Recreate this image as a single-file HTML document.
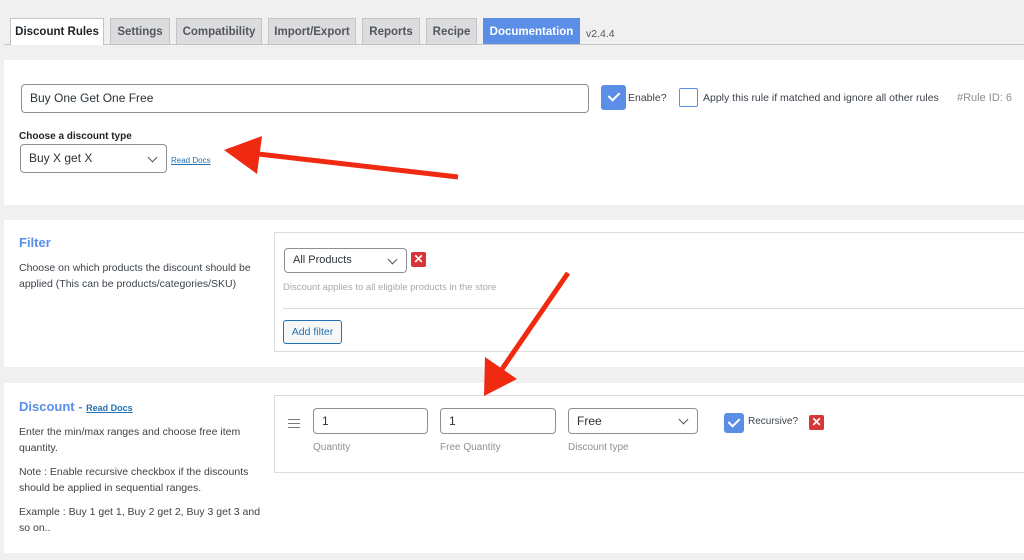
<!DOCTYPE html>
<html><head><meta charset="utf-8"><style>
*{box-sizing:border-box;margin:0;padding:0}
body{width:1024px;height:560px;background:#f0f0f1;font-family:"Liberation Sans",sans-serif;color:#3c434a;position:relative;overflow:hidden;font-size:11px}
.a{position:absolute;white-space:nowrap}
.tab{position:absolute;top:18px;height:26px;background:#dcdcde;border:1px solid #c3c4c7;border-bottom:none;font-size:11.5px;font-weight:bold;color:#50575e;text-align:center;line-height:27px}
.panel{position:absolute;left:4px;right:0;background:#fff}
.inp{position:absolute;border:1px solid #8c8f94;border-radius:4px;background:#fff;font-size:12px;color:#2c3338;padding-left:8px;line-height:26px}
.sel:after{content:"";position:absolute;right:10px;top:50%;margin-top:-5px;width:6px;height:6px;border-right:1.5px solid #50575e;border-bottom:1.5px solid #50575e;transform:rotate(45deg)}
.cb{position:absolute;background:#5b8ee6;border-radius:3px}
.cb:after{content:"";position:absolute;left:50%;top:45%;width:9px;height:5px;border-left:2px solid #fff;border-bottom:2px solid #fff;transform:translate(-50%,-60%) rotate(-45deg)}
.x{position:absolute;width:15px;height:15px;background:#d63638;border-radius:2px;color:#fff;font-size:12px;font-weight:bold;text-align:center;line-height:15px}
.lbl{position:absolute;font-size:10px;color:#8c8f94}
.box{position:absolute;border:1px solid #dcdcde;background:#fff}
</style></head><body>
<div class="a" style="left:4px;right:0;top:44px;border-top:1px solid #c3c4c7"></div>
<div class="tab" style="left:10px;width:94px;background:#fff;color:#1d2327;height:27px">Discount Rules</div>
<div class="tab" style="left:110px;width:60px">Settings</div>
<div class="tab" style="left:176px;width:86px">Compatibility</div>
<div class="tab" style="left:268px;width:88px">Import/Export</div>
<div class="tab" style="left:362px;width:58px">Reports</div>
<div class="tab" style="left:426px;width:51px">Recipe</div>
<div class="tab" style="left:483px;width:97px;background:#5b8ee6;border-color:#5b8ee6;color:#fff">Documentation</div>
<div class="a" style="left:586px;top:28px;font-size:10.5px;color:#50575e">v2.4.4</div>

<div class="panel" style="top:60px;height:145px"></div>
<div class="inp" style="left:21px;top:84px;width:568px;height:29px;line-height:27px">Buy One Get One Free</div>
<div class="cb" style="left:601px;top:85px;width:25px;height:25px"></div>
<div class="a" style="left:628px;top:92px;font-size:10.5px">Enable?</div>
<div class="a" style="left:679px;top:88px;width:19px;height:19px;border:1.5px solid #5b8ee6;border-radius:2px"></div>
<div class="a" style="left:703px;top:92px;font-size:10.5px">Apply this rule if matched and ignore all other rules</div>
<div class="a" style="left:957px;top:92px;font-size:11px;color:#8c8f94">#Rule ID: 6</div>
<div class="a" style="left:19px;top:131px;font-size:10px;font-weight:bold;color:#1d2327">Choose a discount type</div>
<div class="inp sel" style="left:20px;top:144px;width:147px;height:29px">Buy X get X</div>
<div class="a" style="left:171px;top:156px;font-size:8px;color:#2271b1;text-decoration:underline">Read Docs</div>

<div class="panel" style="top:220px;height:147px"></div>
<div class="a" style="left:19px;top:235px;font-size:13px;font-weight:bold;color:#5b8ee6">Filter</div>
<div class="a" style="left:19px;top:260px;font-size:10.5px;line-height:16px">Choose on which products the discount should be<br>applied (This can be products/categories/SKU)</div>
<div class="box" style="left:274px;top:232px;width:760px;height:120px"></div>
<div class="inp sel" style="left:284px;top:248px;width:123px;height:25px;line-height:23px;font-size:11px">All Products</div>
<div class="x" style="left:411px;top:252px">✕</div>
<div class="a" style="left:283px;top:282px;font-size:9.5px;color:#a7aaad">Discount applies to all eligible products in the store</div>
<div class="a" style="left:283px;right:0;top:308px;border-top:1px solid #dcdcde"></div>
<div class="a" style="left:283px;top:320px;width:59px;height:24px;border:1px solid #2271b1;border-radius:3px;background:#f6f7f7;color:#2271b1;font-size:10.5px;text-align:center;line-height:22px">Add filter</div>

<div class="panel" style="top:383px;height:170px"></div>
<div class="a" style="left:19px;top:399px;font-size:13px;font-weight:bold;color:#5b8ee6">Discount - <span style="font-size:9px;color:#2271b1;text-decoration:underline">Read Docs</span></div>
<div class="a" style="left:19px;top:424px;font-size:10.5px;line-height:16px">Enter the min/max ranges and choose free item<br>quantity.</div>
<div class="a" style="left:19px;top:464px;font-size:10.5px;line-height:16px">Note : Enable recursive checkbox if the discounts<br>should be applied in sequential ranges.</div>
<div class="a" style="left:19px;top:504px;font-size:10.5px;line-height:16px">Example : Buy 1 get 1, Buy 2 get 2, Buy 3 get 3 and<br>so on..</div>
<div class="box" style="left:274px;top:395px;width:760px;height:78px"></div>
<div class="a" style="left:288px;top:419px;width:12px;height:9px;border-top:1.5px solid #787c82;border-bottom:1.5px solid #787c82"></div>
<div class="a" style="left:288px;top:423px;width:12px;border-top:1.5px solid #787c82"></div>
<div class="inp" style="left:313px;top:408px;width:115px;height:26px;line-height:24px">1</div>
<div class="inp" style="left:440px;top:408px;width:116px;height:26px;line-height:24px">1</div>
<div class="inp sel" style="left:568px;top:408px;width:130px;height:26px;line-height:24px">Free</div>
<div class="lbl" style="left:313px;top:442px">Quantity</div>
<div class="lbl" style="left:440px;top:442px">Free Quantity</div>
<div class="lbl" style="left:568px;top:442px">Discount type</div>
<div class="cb" style="left:724px;top:413px;width:20px;height:20px"></div>
<div class="a" style="left:748px;top:416px;font-size:10px">Recursive?</div>
<div class="x" style="left:809px;top:415px">✕</div>

<svg class="a" style="left:0;top:0" width="1024" height="560">
<g stroke="#f02a10" stroke-width="5" fill="#f02a10">
<line x1="458" y1="177" x2="250" y2="153"/>
<polygon points="224,150 262,136 257,174" stroke="none"/>
<line x1="568" y1="273" x2="500" y2="372"/>
<polygon points="484,396 485,357 517,379" stroke="none"/>
</g></svg>
</body></html>
